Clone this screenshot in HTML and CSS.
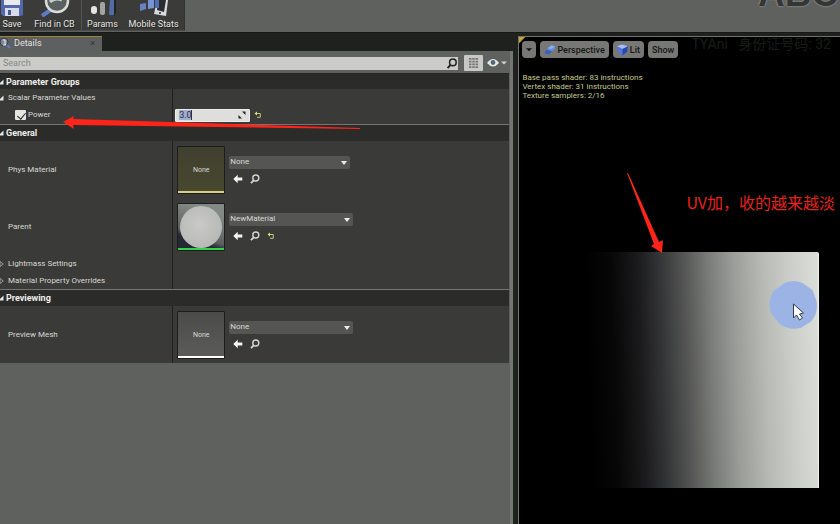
FILE: index.html
```
<!DOCTYPE html>
<html lang="en">
<head>
<meta charset="utf-8">
<title>Material Instance Editor</title>
<link rel="stylesheet" href="styles.css">
</head>
<body>
<svg class="defs" aria-hidden="true">
  <symbol id="lens" viewBox="0 0 10 10"><circle cx="5.8" cy="4" r="3" fill="none" stroke="currentColor" stroke-width="1.4"/><path d="M3.7 6.3 1 9.2" stroke="currentColor" stroke-width="1.8"/></symbol>
  <symbol id="back" viewBox="0 0 10 10"><path d="M.3 5 4.7.8V3.4H9.3V6.6H4.7V9.2Z" fill="#f4f4f0"/></symbol>
  <symbol id="undo" viewBox="0 0 8 8"><path d="M2 2.5H6.3V6.3H3" fill="none" stroke="#c3c58b" stroke-width="1"/><path d="M.5 2.5 3 .5V4.5Z" fill="#dce06f"/></symbol>
  <symbol id="open" viewBox="0 0 6 6"><path d="M5.5.5V5.5H.5Z" fill="#e6e6e4"/></symbol>
  <symbol id="closed" viewBox="0 0 6 6"><path d="M2 .5 5.3 3 2 5.5Z" fill="none" stroke="#b0b0ae" stroke-width=".8"/></symbol>
</svg>
<div class="app">
  <header class="toolbar">
    <nav class="tools">
      <button class="tool save"><svg viewBox="0 0 24 17"><path d="M1 0H23V15L21 16H3L1 14Z" fill="#5269ae"/><path d="M4 0H20V5H4Z" fill="#e8eaf0"/><path d="M5 8H19V16H5Z" fill="#d9dce6"/><path d="M8 10H11V15H8Z" fill="#44589b"/></svg>Save</button>
      <button class="tool find"><svg viewBox="0 0 30 17"><path d="M12 9 2 16" stroke="#5d7bc6" stroke-width="4"/><circle cx="17" cy="1" r="11" fill="#59605f" stroke="#d9ddda" stroke-width="2.5"/><path d="M10 2Q15-3 22 0" fill="none" stroke="#c5cccc" stroke-width="3"/></svg>Find in CB</button>
      <button class="tool params"><svg viewBox="0 0 28 17"><rect x="2" y="6" width="6" height="8" rx="3" fill="#e5e5e3"/><rect x="11" y="2" width="5" height="13" rx="2" fill="#a3a4a1"/><path d="M21 0H26V15H20Z" fill="#526ca5"/><path d="M25 0H27V13L25 16Z" fill="#222"/></svg>Params</button>
      <button class="tool stats"><svg viewBox="0 0 28 17"><path d="M17 0H28L26 16 14 14Z" fill="#d9dadd"/><path d="M18 0H26L24 12 17 10Z" fill="#292c30"/><path d="M0 4 6 3V9L0 11Z" fill="#6682c5"/><path d="M8 0H14V8L8 9Z" fill="#7594d5"/><path d="M15 0H19V8L15 8Z" fill="#506dac"/><circle cx="20" cy="13" r="1" fill="#222"/></svg>Mobile Stats</button>
    </nav>
    <div class="brand" aria-hidden="true">ABC</div>
  </header>
  <div class="workspace">
    <main class="details">
      <div class="tabs"><div class="tab"><svg class="tab-icon" viewBox="0 0 12 12"><circle cx="4" cy="5" r="4" fill="#81878f" stroke="#333a50"/><path d="M3 3H5V8M3 8H6" fill="none" stroke="#eee"/><path d="m7 8 3 3" stroke="#5d78c5" stroke-width="2"/></svg><span>Details</span><button class="close" aria-label="Close">×</button></div></div>
      <div class="panel">
        <div class="searchbar">
          <label class="search"><input type="text" placeholder="Search" aria-label="Search"><svg class="search-icon"><use href="#lens"/></svg></label>
          <button class="grid-button" aria-label="Property matrix"><svg viewBox="0 0 12 12"><path d="M1 1.5H11M1 4.5H11M1 7.5H11M1 10.5H11" stroke="#777" stroke-width="2" stroke-dasharray="2.8 .8"/></svg></button>
          <button class="eye" aria-label="View options"><svg viewBox="0 0 20 10"><path d="M0 5Q6-3 12 5 6 12 0 5Z" fill="#e8e8e5"/><circle cx="6" cy="4.5" r="2.4" fill="#53677b"/><path d="M14 3.5H20L17 6.5Z" fill="#d1d1cf"/></svg></button>
        </div>
        <div class="props">
          <h2 class="group first"><svg class="arrow"><use href="#open"/></svg>Parameter Groups</h2>
          <div class="row"><div class="name"><svg class="arrow"><use href="#open"/></svg>Scalar Parameter Values</div><div class="value"></div></div>
          <div class="row power"><div class="name"><label class="check"><input type="checkbox" checked>Power</label></div><div class="value"><label class="number"><input type="text" value="3.0" aria-label="Power value"><svg viewBox="0 0 8 8"><path d="M4 .5H7.5V4ZM.5 4V7.5H4Z" fill="#222"/></svg></label><button class="icon small" aria-label="Reset"><svg><use href="#undo"/></svg></button></div></div>
          <h2 class="group"><svg class="arrow"><use href="#open"/></svg>General</h2>
          <div class="row asset"><div class="name">Phys Material</div><div class="value"><div class="thumb olive">None</div><div class="picker"><div class="drop narrow"><select aria-label="Phys Material"><option>None</option></select></div><div class="actions"><button class="icon" aria-label="Use selected"><svg><use href="#back"/></svg></button><button class="icon" aria-label="Browse"><svg><use href="#lens"/></svg></button></div></div></div></div>
          <div class="row asset"><div class="name">Parent</div><div class="value"><div class="thumb material"><i></i></div><div class="picker"><div class="drop"><select aria-label="Parent"><option>NewMaterial</option></select></div><div class="actions"><button class="icon" aria-label="Use selected"><svg><use href="#back"/></svg></button><button class="icon" aria-label="Browse"><svg><use href="#lens"/></svg></button><button class="icon small" aria-label="Reset"><svg><use href="#undo"/></svg></button></div></div></div></div>
          <div class="row"><div class="name"><svg class="arrow"><use href="#closed"/></svg>Lightmass Settings</div><div class="value"></div></div>
          <div class="row"><div class="name"><svg class="arrow"><use href="#closed"/></svg>Material Property Overrides</div><div class="value"></div></div>
          <h2 class="group"><svg class="arrow"><use href="#open"/></svg>Previewing</h2>
          <div class="row asset"><div class="name">Preview Mesh</div><div class="value"><div class="thumb mesh">None</div><div class="picker"><div class="drop"><select aria-label="Preview Mesh"><option>None</option></select></div><div class="actions"><button class="icon" aria-label="Use selected"><svg><use href="#back"/></svg></button><button class="icon" aria-label="Browse"><svg><use href="#lens"/></svg></button></div></div></div></div>
        </div>
      </div>
    </main>
    <section class="viewport">
      <div class="view-tools">
        <button class="view-menu" aria-label="Viewport options"><svg viewBox="0 0 7 5"><path d="M0 1H7L3.5 4.5Z" fill="#111"/></svg></button>
        <button class="perspective"><svg viewBox="0 0 12 12"><path d="m1 8 4-3 4 2-4 4-4-1Z" fill="#395fc0"/><path d="m4 4 4-3 4 1v3L8 7 4 6Z" fill="#638ee2"/><path d="m4 4 4-3 4 1-4 3Z" fill="#8fb1ef"/></svg>Perspective</button>
        <button class="lit"><svg viewBox="0 0 12 12"><path d="m0 2 5-2 7 2-6 3Z" fill="#a9bdf1"/><path d="m0 2 6 3v7L1 8Z" fill="#5577df"/><path d="m6 5 6-3-1 6-5 4Z" fill="#2448b7"/></svg>Lit</button>
        <button class="show">Show</button>
      </div>
      <p class="info">Base pass shader: 83 instructions<br>Vertex shader: 31 instructions<br>Texture samplers: 2/16</p>
      <div class="watermark">TYAni&nbsp;&nbsp; 身份证号码: 32</div>
      <div class="plane"></div>
      <svg class="cursor" viewBox="0 0 48 48"><path d="M15 2Q24-2 33 2L43 9 47 20Q49 33 41 41L31 47Q19 50 9 42L1 31Q-2 20 4 10Z" fill="#9bb3e5"/><path d="M24 23V37L27 34 30 39 33 37 30 33 34 32Z" fill="#fff" stroke="#333d51" stroke-width="1"/></svg>
      <div class="note">UV加，收的越来越淡</div>
    </section>
  </div>
  <svg class="annotation left" viewBox="0 0 300 16"><path d="M0 6 11 0 10 3 297 12V13L10 9 11 13Z" fill="#ff2419"/></svg>
  <svg class="annotation right" viewBox="0 0 37 82"><path d="M0 0H1L32 69 36 67 35 80 24 73 27 71Z" fill="#ff2419"/></svg>
</div>
</body>
</html>
```
FILE: styles.css
```
* { box-sizing: border-box; }
body { margin: 0; background: #1f211f; color: #d8d8d5; font: 8px/10px Roboto, "Noto Sans CJK SC", sans-serif; }
button, input, select { font: inherit; color: inherit; margin: 0; padding: 0; border: 0; background: none; }
svg { display: block; flex: none; }
.defs { position: absolute; width: 0; height: 0; }
.app { position: relative; display: flex; flex-direction: column; min-height: 100vh; overflow: hidden; }

.toolbar { display: flex; justify-content: space-between; height: 32px; background: #5f615e; overflow: hidden; }
.tools { display: flex; height: 31px; padding-right: 4px; background: #3b3c3a; border-right: 1px solid #323331; border-bottom: 1px solid #4b4d4a; }
.tool { display: flex; flex-direction: column; align-items: center; gap: 1px; font-size: 9px; line-height: 12px; color: #e4e4e1; text-shadow: 1px 1px #222; white-space: nowrap; }
.tool svg { height: 17px; }
.save { width: 24px; }
.find { width: 58px; padding-left: 4px; border-right: 1px solid #555654; }
.params { width: 41px; }
.stats { width: 53px; margin-left: 4px; }
.brand { width: 82px; margin-top: -12px; font: bold 37px/12px "Liberation Sans", sans-serif; color: #343633; text-shadow: 0 0 2px #b8bab7; white-space: nowrap; }

.workspace { display: flex; flex: 1; border-top: 1px solid #171917; }
.details { display: flex; flex-direction: column; flex: 514 1 0; min-width: 0; }
.tabs { height: 18px; padding-top: 3px; }
.tab { display: flex; align-items: center; width: 102px; height: 15px; padding-bottom: 2px; background: #5d5f60; border-top: 1px solid #9c8434; font-size: 9px; color: #e0e0dd; }
.tab-icon { width: 12px; height: 12px; margin-right: 2px; }
.close { margin: 0 7px 0 auto; color: #30312f; }
.panel { flex: 1; background: #5f615e; border-right: 3px solid #747673; padding-right: 1px; }
.searchbar { display: flex; align-items: center; height: 22px; padding: 2px 2px 0 0; }
.search { display: flex; align-items: center; flex: 1; height: 13px; background: #cbccc9; color: #222; }
.search input { flex: 1; min-width: 0; padding-left: 3px; outline: 0; font-size: 9px; }
.search input::placeholder { color: #858783; opacity: 1; }
.search-icon { width: 12px; height: 11px; }
.grid-button { width: 19px; height: 16px; margin: 0 4px 0 6px; padding: 2px 4px; background: #c8c9c6; border-radius: 1px; }
.grid-button svg { width: 11px; height: 12px; }
.eye svg { width: 20px; height: 10px; }

.props { background: #3a3b38; border-top: 1px solid #252624; }
.group { display: flex; align-items: center; height: 17px; margin: 0; background: #2b2c2a; border-top: 1px solid #747572; font-size: 9px; font-weight: 700; color: #eeeeea; }
.group.first { height: 15px; border-top: 0; }
.arrow { width: 6px; height: 6px; margin-left: -2px; margin-right: 2px; }
.name .arrow { margin-right: 4px; }
.row { display: flex; height: 17px; }
.power { height: 18px; }
.asset { height: 57px; }
.name { display: flex; align-items: center; flex: 0 0 34%; border-right: 1px solid #20211f; white-space: nowrap; }
.asset .name { padding-left: 8px; }
.value { display: flex; align-items: center; padding-left: 2px; }
.check { display: flex; align-items: center; gap: 2px; padding-left: 15px; }
.check input { appearance: none; position: relative; width: 11px; height: 10px; background: #e5e5e2; border-radius: 1px; }
.check input::after { content: ""; position: absolute; left: 4px; top: 1px; width: 4px; height: 7px; border: solid #222; border-width: 0 1px 1px 0; transform: rotate(40deg); }
.number { display: flex; align-items: center; width: 75px; height: 13px; padding-right: 3px; background: #dedfdd; border: 1px solid #eee; border-radius: 1px; color: #25304c; font-size: 9px; }
.number input { flex: 1; min-width: 0; margin-left: 3px; outline: 0; background: linear-gradient(90deg, #a2add0 12px, #333 12px 13px, transparent 13px); }
.number svg { width: 8px; height: 8px; }
.icon { width: 10px; height: 10px; color: #d5d5d0; }
.icon svg { width: 100%; height: 100%; }
.small { width: 8px; height: 8px; }
.number + .small { margin-left: 4px; }
.thumb { display: flex; align-items: center; justify-content: center; width: 48px; height: 48px; margin-left: 2px; border: 1px solid #1d1e1c; border-radius: 1px; font-size: 7px; }
.olive { background: linear-gradient(#d9d086, #d9d086) bottom / 100% 2px no-repeat, linear-gradient(#40402f, #48472f); }
.mesh { background: linear-gradient(#fff, #fff) bottom / 100% 2px no-repeat, linear-gradient(#4b4c4a, #5c5d5b); }
.material { background: linear-gradient(#31d54a, #31d54a) bottom / 100% 2px no-repeat, linear-gradient(20deg, #242935 25%, #5d6062 35%, #858986 80%); }
.material i { width: 42px; height: 42px; border-radius: 50%; background: radial-gradient(circle at 45% 45%, #c9cac7, #b1b3b0); }
.picker { display: flex; flex-direction: column; gap: 5px; padding-left: 4px; }
.drop { position: relative; width: 124px; height: 13px; background: #555653; border-radius: 2px; }
.drop::after { content: ""; position: absolute; right: 3px; top: 5px; border: solid transparent; border-width: 4px 3px 0; border-top-color: #eee; pointer-events: none; }
.drop select { display: block; appearance: none; width: 100%; height: 100%; padding: 0 0 1px 1px; }
.narrow { width: 121px; }
.actions { display: flex; align-items: center; gap: 7px; padding-left: 4px; }

.viewport { position: relative; flex: 321 1 0; min-width: 0; margin: 3px 0 0 5px; background: linear-gradient(135deg, #c9a22f 4px, transparent 5px), #000; border: solid #70726f; border-width: 1px 0 0 1px; overflow: hidden; }
.view-tools { display: flex; gap: 4px; padding: 4px 0 0 3px; }
.view-tools button { display: flex; align-items: center; gap: 2px; height: 17px; padding: 0 4px; background: #777875; border-radius: 4px; color: #151615; font-size: 9px; font-weight: 500; }
.view-tools svg { width: 11px; height: 12px; }
.view-tools .view-menu svg { width: 6px; height: 5px; }
.info { margin: 15px 0 0 3px; line-height: 9px; color: #c6c98c; }
.watermark { position: absolute; left: 172px; top: 0; color: #191b19; font-size: 14px; line-height: 15px; white-space: nowrap; }
.plane { position: absolute; left: 42px; top: 215px; width: 258px; height: 236px; background: linear-gradient(88deg, #000 12%, #070707 22%, #1b1b1d 32%, #333435 40%, #535453 49%, #787a77 58%, #9b9d99 68%, #b8bab6 79%, #cdcfcb 90%, #dcdeda); border-right: 1px solid #eff0ec; border-radius: 0 2px 0 0; }
.cursor { position: absolute; left: 250px; top: 244px; width: 49px; height: 48px; }
.note { position: absolute; left: 167px; top: 155px; color: #e82217; font: 16px/20px "Noto Sans CJK SC", sans-serif; white-space: nowrap; }
.annotation { position: absolute; }
.annotation.left { left: 63px; top: 116px; width: 300px; height: 16px; }
.annotation.right { left: 627px; top: 173px; width: 37px; height: 82px; }
```
